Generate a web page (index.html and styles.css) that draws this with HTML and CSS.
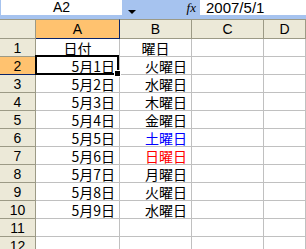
FILE: index.html
```html
<!DOCTYPE html>
<html lang="ja">
  <head>
    <meta charset="UTF-8" />
    <title>Book1</title>
    <link rel="stylesheet" href="styles.css">
  </head>
  <body>
    <div class="formula-bar">
      <div class="name-box">A2</div>
      <div class="name-drop"><span class="arrow"></span></div>
      <div class="fx">fx</div>
      <div class="formula">2007/5/1</div>
    </div>

    <div class="sheet">
      <div class="corner"></div>
      <div class="col-head active">A</div>
      <div class="col-head">B</div>
      <div class="col-head">C</div>
      <div class="col-head">D</div>

      <div class="row-head">1</div>
      <div class="cell center">日付</div>
      <div class="cell center">曜日</div>
      <div class="cell"></div>
      <div class="cell"></div>

      <div class="row-head active">2</div>
      <div class="cell">5月1日</div>
      <div class="cell">火曜日</div>
      <div class="cell"></div>
      <div class="cell"></div>

      <div class="row-head">3</div>
      <div class="cell">5月2日</div>
      <div class="cell">水曜日</div>
      <div class="cell"></div>
      <div class="cell"></div>

      <div class="row-head">4</div>
      <div class="cell">5月3日</div>
      <div class="cell">木曜日</div>
      <div class="cell"></div>
      <div class="cell"></div>

      <div class="row-head">5</div>
      <div class="cell">5月4日</div>
      <div class="cell">金曜日</div>
      <div class="cell"></div>
      <div class="cell"></div>

      <div class="row-head">6</div>
      <div class="cell">5月5日</div>
      <div class="cell sat">土曜日</div>
      <div class="cell"></div>
      <div class="cell"></div>

      <div class="row-head">7</div>
      <div class="cell">5月6日</div>
      <div class="cell sun">日曜日</div>
      <div class="cell"></div>
      <div class="cell"></div>

      <div class="row-head">8</div>
      <div class="cell">5月7日</div>
      <div class="cell">月曜日</div>
      <div class="cell"></div>
      <div class="cell"></div>

      <div class="row-head">9</div>
      <div class="cell">5月8日</div>
      <div class="cell">火曜日</div>
      <div class="cell"></div>
      <div class="cell"></div>

      <div class="row-head">10</div>
      <div class="cell">5月9日</div>
      <div class="cell">水曜日</div>
      <div class="cell"></div>
      <div class="cell"></div>

      <div class="row-head">11</div>
      <div class="cell"></div>
      <div class="cell"></div>
      <div class="cell"></div>
      <div class="cell"></div>

      <div class="row-head">12</div>
      <div class="cell"></div>
      <div class="cell"></div>
      <div class="cell"></div>
      <div class="cell"></div>

      <!-- active cell A2 -->
      <div class="selection"><span class="fill-handle"></span></div>
    </div>
  </body>
</html>
```

FILE: styles.css
```css
/* Reset */
body {
  margin: 0;
  padding: 0;
  width: 306px;
  height: 249px;
  overflow: hidden;
  background-color: #ffffff;
  font-family: "Noto Sans CJK JP", sans-serif;
}

/* Name box + formula bar */
.formula-bar {
  display: flex;
  height: 19px;
  background-color: #a6c3ef;
  box-sizing: border-box;
  padding-left: 1px;
}

.name-box {
  width: 121px;
  height: 15px;
  background-color: #ffffff;
  font-family: "Liberation Sans", sans-serif;
  font-size: 14px;
  line-height: 15px;
  text-align: center;
}

.name-drop {
  width: 20px;
  height: 15px;
  position: relative;
}

.arrow {
  position: absolute;
  left: 6px;
  top: 10px;
  border-left: 4px solid transparent;
  border-right: 4px solid transparent;
  border-top: 4px solid #000000;
}

.fx {
  width: 58px;
  height: 15px;
  box-sizing: border-box;
  padding-right: 4px;
  text-align: right;
  font-family: "Liberation Serif", serif;
  font-style: italic;
  font-size: 13px;
  line-height: 15px;
}

.formula {
  flex: 1;
  height: 15px;
  background-color: #ffffff;
  padding-left: 6px;
  font-family: "Liberation Sans", sans-serif;
  font-size: 15px;
  line-height: 15px;
}

/* Worksheet grid */
.sheet {
  position: relative;
  display: grid;
  grid-template-columns: 36px 84px 72px 72px 1fr;
  grid-template-rows: 20px repeat(12, 18px);
}

.corner,
.col-head,
.row-head {
  box-sizing: border-box;
  background-color: #ece9d8;
  border-right: 1px solid #9c9a86;
  border-bottom: 1px solid #9c9a86;
  font-family: "Liberation Sans", sans-serif;
  font-size: 14px;
  color: #000000;
  display: flex;
  align-items: center;
  justify-content: center;
}

.corner,
.col-head {
  border-top: 1px solid #9c9a86;
}

.col-head.active,
.row-head.active {
  background-color: #ffc26f;
  border-bottom-color: #0a246a;
}

.col-head.active {
  border-right-color: #0a246a;
}

.cell {
  box-sizing: border-box;
  border-right: 1px solid #c0c0c0;
  border-bottom: 1px solid #c0c0c0;
  font-size: 14px;
  line-height: 1;
  padding-right: 4px;
  display: flex;
  align-items: center;
  justify-content: flex-end;
  white-space: nowrap;
}

.cell.center {
  justify-content: center;
  padding-right: 0;
}

.sat {
  color: #0000ff;
}

.sun {
  color: #ff0000;
}

.selection {
  position: absolute;
  left: 35px;
  top: 36px;
  width: 84px;
  height: 20px;
  box-sizing: border-box;
  border: 2px solid #000000;
  pointer-events: none;
}

.fill-handle {
  position: absolute;
  right: -4px;
  bottom: -4px;
  width: 5px;
  height: 5px;
  background-color: #000000;
  border: 1px solid #ffffff;
}
```
